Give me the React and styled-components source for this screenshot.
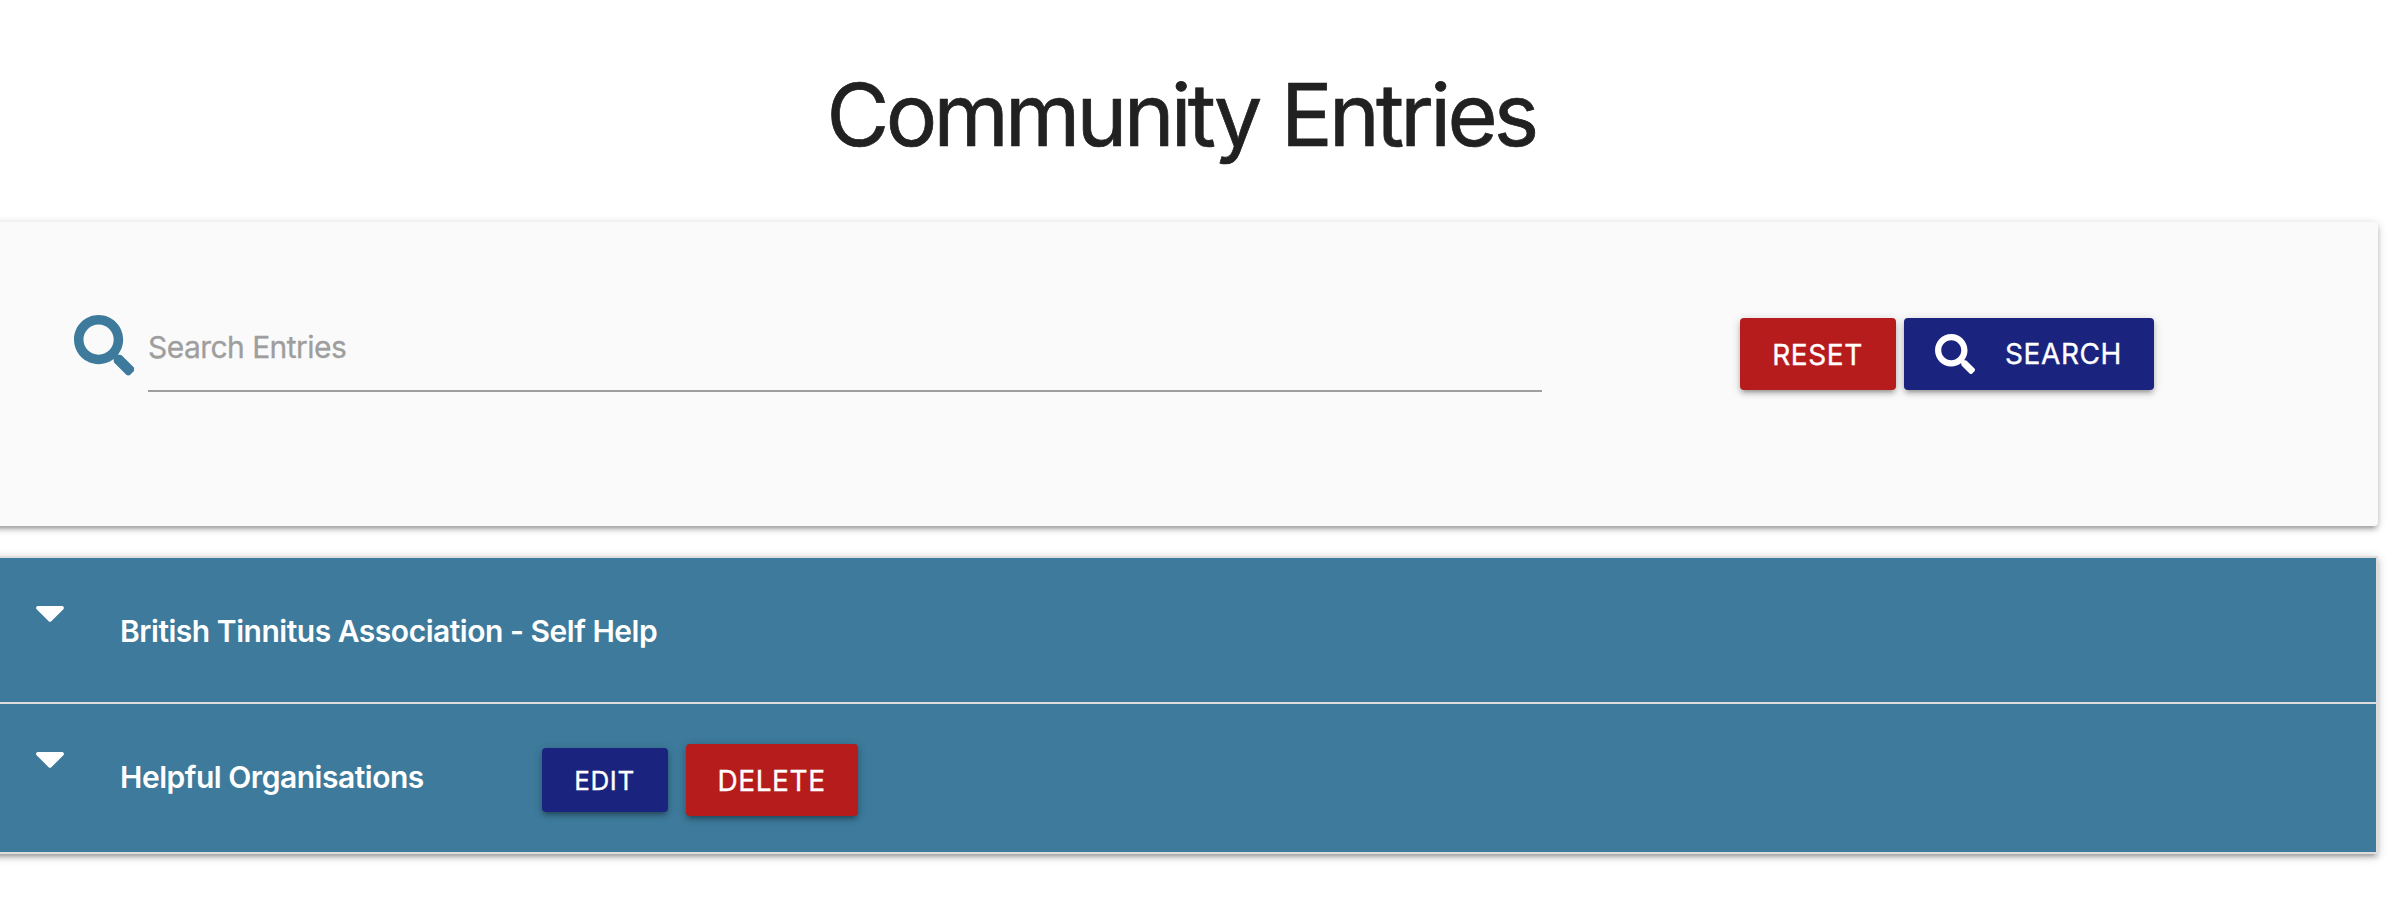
import React from "react";
import styled, { createGlobalStyle } from "styled-components";
import { FaSearch, FaCaretDown } from "react-icons/fa";

const GlobalStyle = createGlobalStyle`
  *, *::before, *::after { box-sizing: border-box; }
  html, body { margin: 0; padding: 0; background: #fff; overflow: hidden; }
  body { font-family: Inter, "Liberation Sans", sans-serif; color: #212121; }
`;

const depth = `0 4px 4px 0 rgba(0,0,0,.14), 0 6px 2px -4px rgba(0,0,0,.12), 0 2px 10px 0 rgba(0,0,0,.2)`;

const Page = styled.main`
  min-height: 916px;
  margin-left: -12px;
  padding-right: 24px;
  display: flex;
  flex-direction: column;
`;

const Title = styled.h1`
  margin: 0;
  height: 222px;
  padding: 63px 4px 0 0;
  font-size: 86px;
  line-height: 104px;
  font-weight: 400;
  letter-spacing: -3.75px;
  word-spacing: 2px;
  -webkit-text-stroke: 0.7px currentColor;
  text-align: center;
`;

const SearchPanel = styled.form`
  display: flex;
  align-items: flex-start;
  height: 304px;
  padding: 93px 224px 0 85.5px;
  background: #fafafa;
  border-radius: 4px;
  box-shadow: ${depth};
`;

const PrefixIcon = styled(FaSearch)`
  flex: none;
  width: 60.5px;
  height: 60.5px;
  margin-right: 14px;
  color: #3d7a9b;
`;

const SearchInput = styled.input`
  width: 1394px;
  height: 77px;
  padding: 0 0 12px;
  border: 0;
  border-bottom: 2px solid #9e9e9e;
  border-radius: 0;
  outline: none;
  background: transparent;
  font: 400 30px/36px Inter, "Liberation Sans", sans-serif;
  letter-spacing: -0.55px;
  -webkit-text-stroke: 0.3px #9e9e9e;
  &::placeholder { color: #9e9e9e; opacity: 1; }
`;

const Actions = styled.div`
  display: flex;
  gap: 8px;
  margin: 3px 0 0 auto;
`;

const tones = { red: "#b71c1c", navy: "#1a237e" };

const Button = styled.button`
  display: flex;
  align-items: center;
  justify-content: ${(p) => (p.$icon ? "flex-start" : "center")};
  flex: none;
  width: ${(p) => p.$width}px;
  height: ${(p) => (p.$small ? 64 : 72)}px;
  padding: ${(p) => (p.$icon ? "0 0 0 31px" : "1px 1px 0 0")};
  border: 0;
  border-radius: 4px;
  background: ${(p) => tones[p.$tone]};
  box-shadow: ${depth};
  color: #fff;
  font: 400 ${(p) => (p.$small ? 26 : 28)}px/36px Inter, "Liberation Sans", sans-serif;
  letter-spacing: 0.6px;
  -webkit-text-stroke: 0.35px currentColor;
  text-transform: uppercase;
  svg { width: 40px; height: 40px; margin-right: 30px; }
`;

const EntryList = styled.ul`
  list-style: none;
  margin: 30px 0 0;
  padding: 0;
  border: 2px solid #ddd;
  border-bottom: 0;
  box-shadow: ${depth};
`;

const Entry = styled.li`
  display: flex;
  align-items: flex-start;
  height: ${(p) => p.$height}px;
  padding-left: 45px;
  background: #3d7a9b;
  border-bottom: 2px solid #ddd;
  color: #fff;
`;

const Caret = styled(FaCaretDown)`
  flex: none;
  width: 30px;
  height: 48px;
  margin: 30px 55px 0 0;
`;

const EntryName = styled.span`
  margin-top: 55px;
  font-size: 30px;
  line-height: 36px;
  font-weight: 600;
  letter-spacing: -0.48px;
  white-space: nowrap;
  width: ${(p) => (p.$width ? p.$width + "px" : "auto")};
`;

const EntryActions = styled.div`
  display: flex;
  align-items: center;
  gap: 18px;
  margin-top: 40px;
`;

export default function App() {
  return (
    <>
      <GlobalStyle />
      <Page>
        <Title>Community Entries</Title>
        <SearchPanel onSubmit={(e) => e.preventDefault()}>
          <PrefixIcon />
          <SearchInput placeholder="Search Entries" aria-label="Search Entries" />
          <Actions>
            <Button type="reset" $tone="red" $width={156}>Reset</Button>
            <Button type="submit" $tone="navy" $width={250} $icon>
              <FaSearch />
              Search
            </Button>
          </Actions>
        </SearchPanel>
        <EntryList>
          <Entry $height={146}>
            <Caret />
            <EntryName>British Tinnitus Association - Self Help</EntryName>
          </Entry>
          <Entry $height={150}>
            <Caret />
            <EntryName $width={422}>Helpful Organisations</EntryName>
            <EntryActions>
              <Button type="button" $tone="navy" $width={126} $small>Edit</Button>
              <Button type="button" $tone="red" $width={172}>Delete</Button>
            </EntryActions>
          </Entry>
        </EntryList>
      </Page>
    </>
  );
}
